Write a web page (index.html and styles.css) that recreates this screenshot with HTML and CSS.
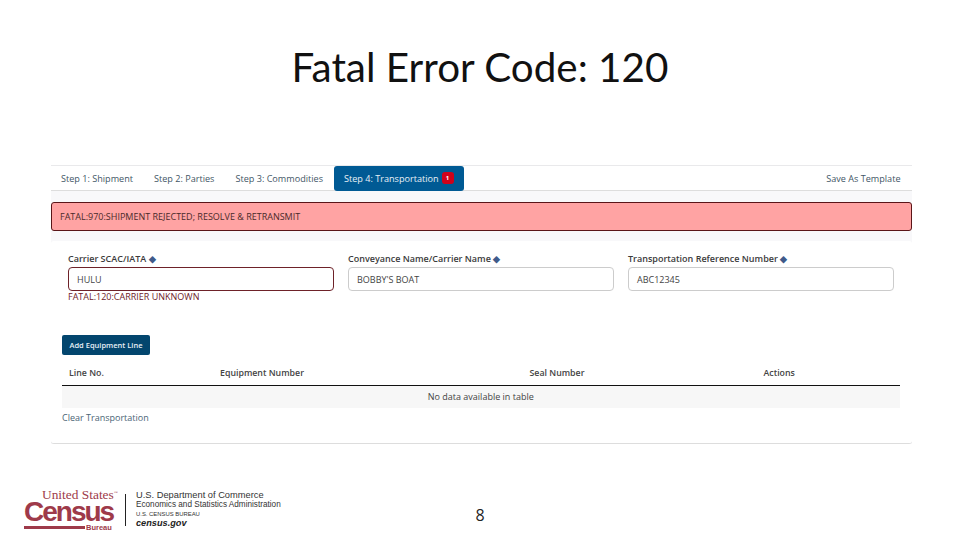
FILE: index.html
```html
<!DOCTYPE html>
<html lang="en">
<head>
<meta charset="utf-8">
<title>Fatal Error Code: 120</title>
<link rel="stylesheet" href="styles.css">
</head>
<body>
<main class="slide">
  <h1 class="title">Fatal Error Code: 120</h1>
  <section class="shot">
    <nav class="tabs">
      <a class="tab">Step 1: Shipment</a>
      <a class="tab">Step 2: Parties</a>
      <a class="tab">Step 3: Commodities</a>
      <a class="tab tab-active">Step 4: Transportation <span class="badge">1</span></a>
      <a class="tab-save">Save As Template</a>
    </nav>
    <div class="alert">FATAL:970:SHIPMENT REJECTED; RESOLVE &amp; RETRANSMIT</div>
    <div class="card">
      <div class="fields">
        <div class="field">
          <label class="label">Carrier SCAC/IATA <span class="dia">◆</span></label>
          <div class="input input-error">HULU</div>
          <div class="err">FATAL:120:CARRIER UNKNOWN</div>
        </div>
        <div class="field">
          <label class="label">Conveyance Name/Carrier Name <span class="dia">◆</span></label>
          <div class="input">BOBBY'S BOAT</div>
        </div>
        <div class="field">
          <label class="label">Transportation Reference Number <span class="dia">◆</span></label>
          <div class="input">ABC12345</div>
        </div>
      </div>
      <button class="btn">Add Equipment Line</button>
      <div class="thead">
        <span>Line No.</span>
        <span>Equipment Number</span>
        <span>Seal Number</span>
        <span>Actions</span>
      </div>
      <div class="empty">No data available in table</div>
      <a class="clear">Clear Transportation</a>
    </div>
  </section>
  <footer class="footer">
    <div class="logo">
      <div class="census">
        <div class="us">United States<sup class="tm">™</sup></div>
        <div class="cname">Census</div>
        <div class="barrow"><span class="bar"></span><span class="bureau">Bureau</span></div>
      </div>
      <div class="divider"></div>
      <div class="dept">
        <div class="d1">U.S. Department of Commerce</div>
        <div class="d2">Economics and Statistics Administration</div>
        <div class="d3">U.S. CENSUS BUREAU</div>
        <div class="d4">census.gov</div>
      </div>
    </div>
    <div class="pagenum">8</div>
    <div></div>
  </footer>
</main>
</body>
</html>
```
FILE: styles.css
```css
* { box-sizing: border-box; }
html, body { margin: 0; padding: 0; background: #fff; }
.slide {
  width: 960px; height: 540px; overflow: hidden;
  display: flex; flex-direction: column;
  font-family: "Open Sans", sans-serif;
}
.title {
  margin: 0; height: 165px; padding-top: 42px;
  text-align: center; font-family: Lato, sans-serif;
  font-weight: 400; font-size: 40.4px; line-height: 50px; color: #111;
}
.shot {
  margin-left: 51px; width: 860.5px; height: 279px;
  background: #f8f8fa;
  display: flex; flex-direction: column;
}
.tabs {
  height: 26px; flex: none; background: #fff; border-top: 1px solid #e9e9eb; border-bottom: 1px solid #ddd;
  display: flex; align-items: center; font-size: 9.1px; color: #3f5666;
}
.tab { padding: 0 10px; margin-right: 1px; line-height: 23px; white-space: nowrap; }
.tab-active {
  background: #005a94; color: #e8f0f6; height: 25px; border-radius: 3px; width: 130px;
  display: flex; align-items: center; gap: 3px; padding: 0 0 0 10px; margin: 0;
}
.badge {
  width: 12px; height: 12px; border-radius: 3px; background: #d0021b; color: #fff;
  font-size: 6px; line-height: 12px; text-align: center; font-weight: 700;
}
.tab-save { margin-left: auto; padding-right: 11px; color: #3f5666; line-height: 23px; }
.alert {
  height: 29px; flex: none; margin-top: 11px; background: #ffa3a3; border: 1px solid #5a1518; border-radius: 3px;
  font-size: 9px; line-height: 28px; padding-left: 8px; color: #4a2a2a;
}
.card {
  flex: 1; margin-top: 10px; background: #fff; border-radius: 3px; border-bottom: 1px solid #ddd;
  padding: 12px 11px 0;
  display: flex; flex-direction: column; align-items: stretch;
}
.fields { display: grid; grid-template-columns: repeat(3, 265.5px); column-gap: 14.5px; padding-left: 6px; height: 82px; }
.label { display: block; font-size: 9px; font-weight: 600; color: #3b3b3b; line-height: 13px; margin-top: -1px; margin-bottom: 2px; white-space: nowrap; }
.dia { color: #3f5a8a; font-size: 9px; }
.input {
  height: 23.5px; border: 1px solid #ccc; border-radius: 4px; background: #fff;
  font-size: 9px; line-height: 24px; padding-left: 8px; color: #444;
}
.input-error { border-color: #6e2229; }
.err { font-size: 9px; line-height: 12px; color: #6e2229; }
.btn {
  align-self: flex-start; width: 88px; height: 20px; border: 0; border-radius: 2px;
  background: #03466e; color: #e8f0f6; font-family: inherit; font-size: 7.5px; font-weight: 600; padding: 0;
}
.thead {
  display: grid; grid-template-columns: 151px 309.5px 234px 1fr; height: 30.5px;
  border-bottom: 1px solid #111; font-size: 8.8px; font-weight: 600; color: #444; line-height: 36px; padding-left: 7px; margin-right: 1px;
}
.empty { height: 22px; background: #f7f7f7; font-size: 9px; line-height: 22px; text-align: center; color: #444; margin-right: 1px; }
.clear { font-size: 9px; line-height: 19px; color: #4a6475; }
.footer {
  flex: 1; display: grid; grid-template-columns: 1fr auto 1fr; align-items: start;
}
.logo { display: flex; align-items: flex-start; padding: 46px 0 0 24px; }
.census { width: 90px; color: #9e3a4a; font-family: "Liberation Sans", sans-serif; }
.us { font-family: "Liberation Serif", serif; font-size: 13.4px; line-height: 10px; padding-left: 18px; white-space: nowrap; }
.tm { font-size: 4px; line-height: 0; }
.cname { font-weight: 700; font-size: 28px; line-height: 23px; letter-spacing: -2px; }
.barrow { display: flex; align-items: center; gap: 1px; height: 9px; }
.bar { width: 61px; height: 3.5px; background: #9e3a4a; flex: none; }
.bureau { font-size: 7.5px; line-height: 9px; font-weight: 700; }
.divider { width: 1px; height: 32px; background: #222; margin: 4px 10px 0 11px; }
.dept { font-family: "Liberation Sans", sans-serif; color: #333; white-space: nowrap; }
.d1 { font-size: 9.3px; line-height: 10px; }
.d2 { font-size: 8.2px; line-height: 10px; }
.d3 { font-size: 5.9px; line-height: 8px; }
.d4 { font-size: 9.2px; line-height: 10px; font-weight: 700; font-style: italic; color: #222; }
.pagenum { font-size: 16px; line-height: 22px; color: #222; padding-top: 60px; }
```
